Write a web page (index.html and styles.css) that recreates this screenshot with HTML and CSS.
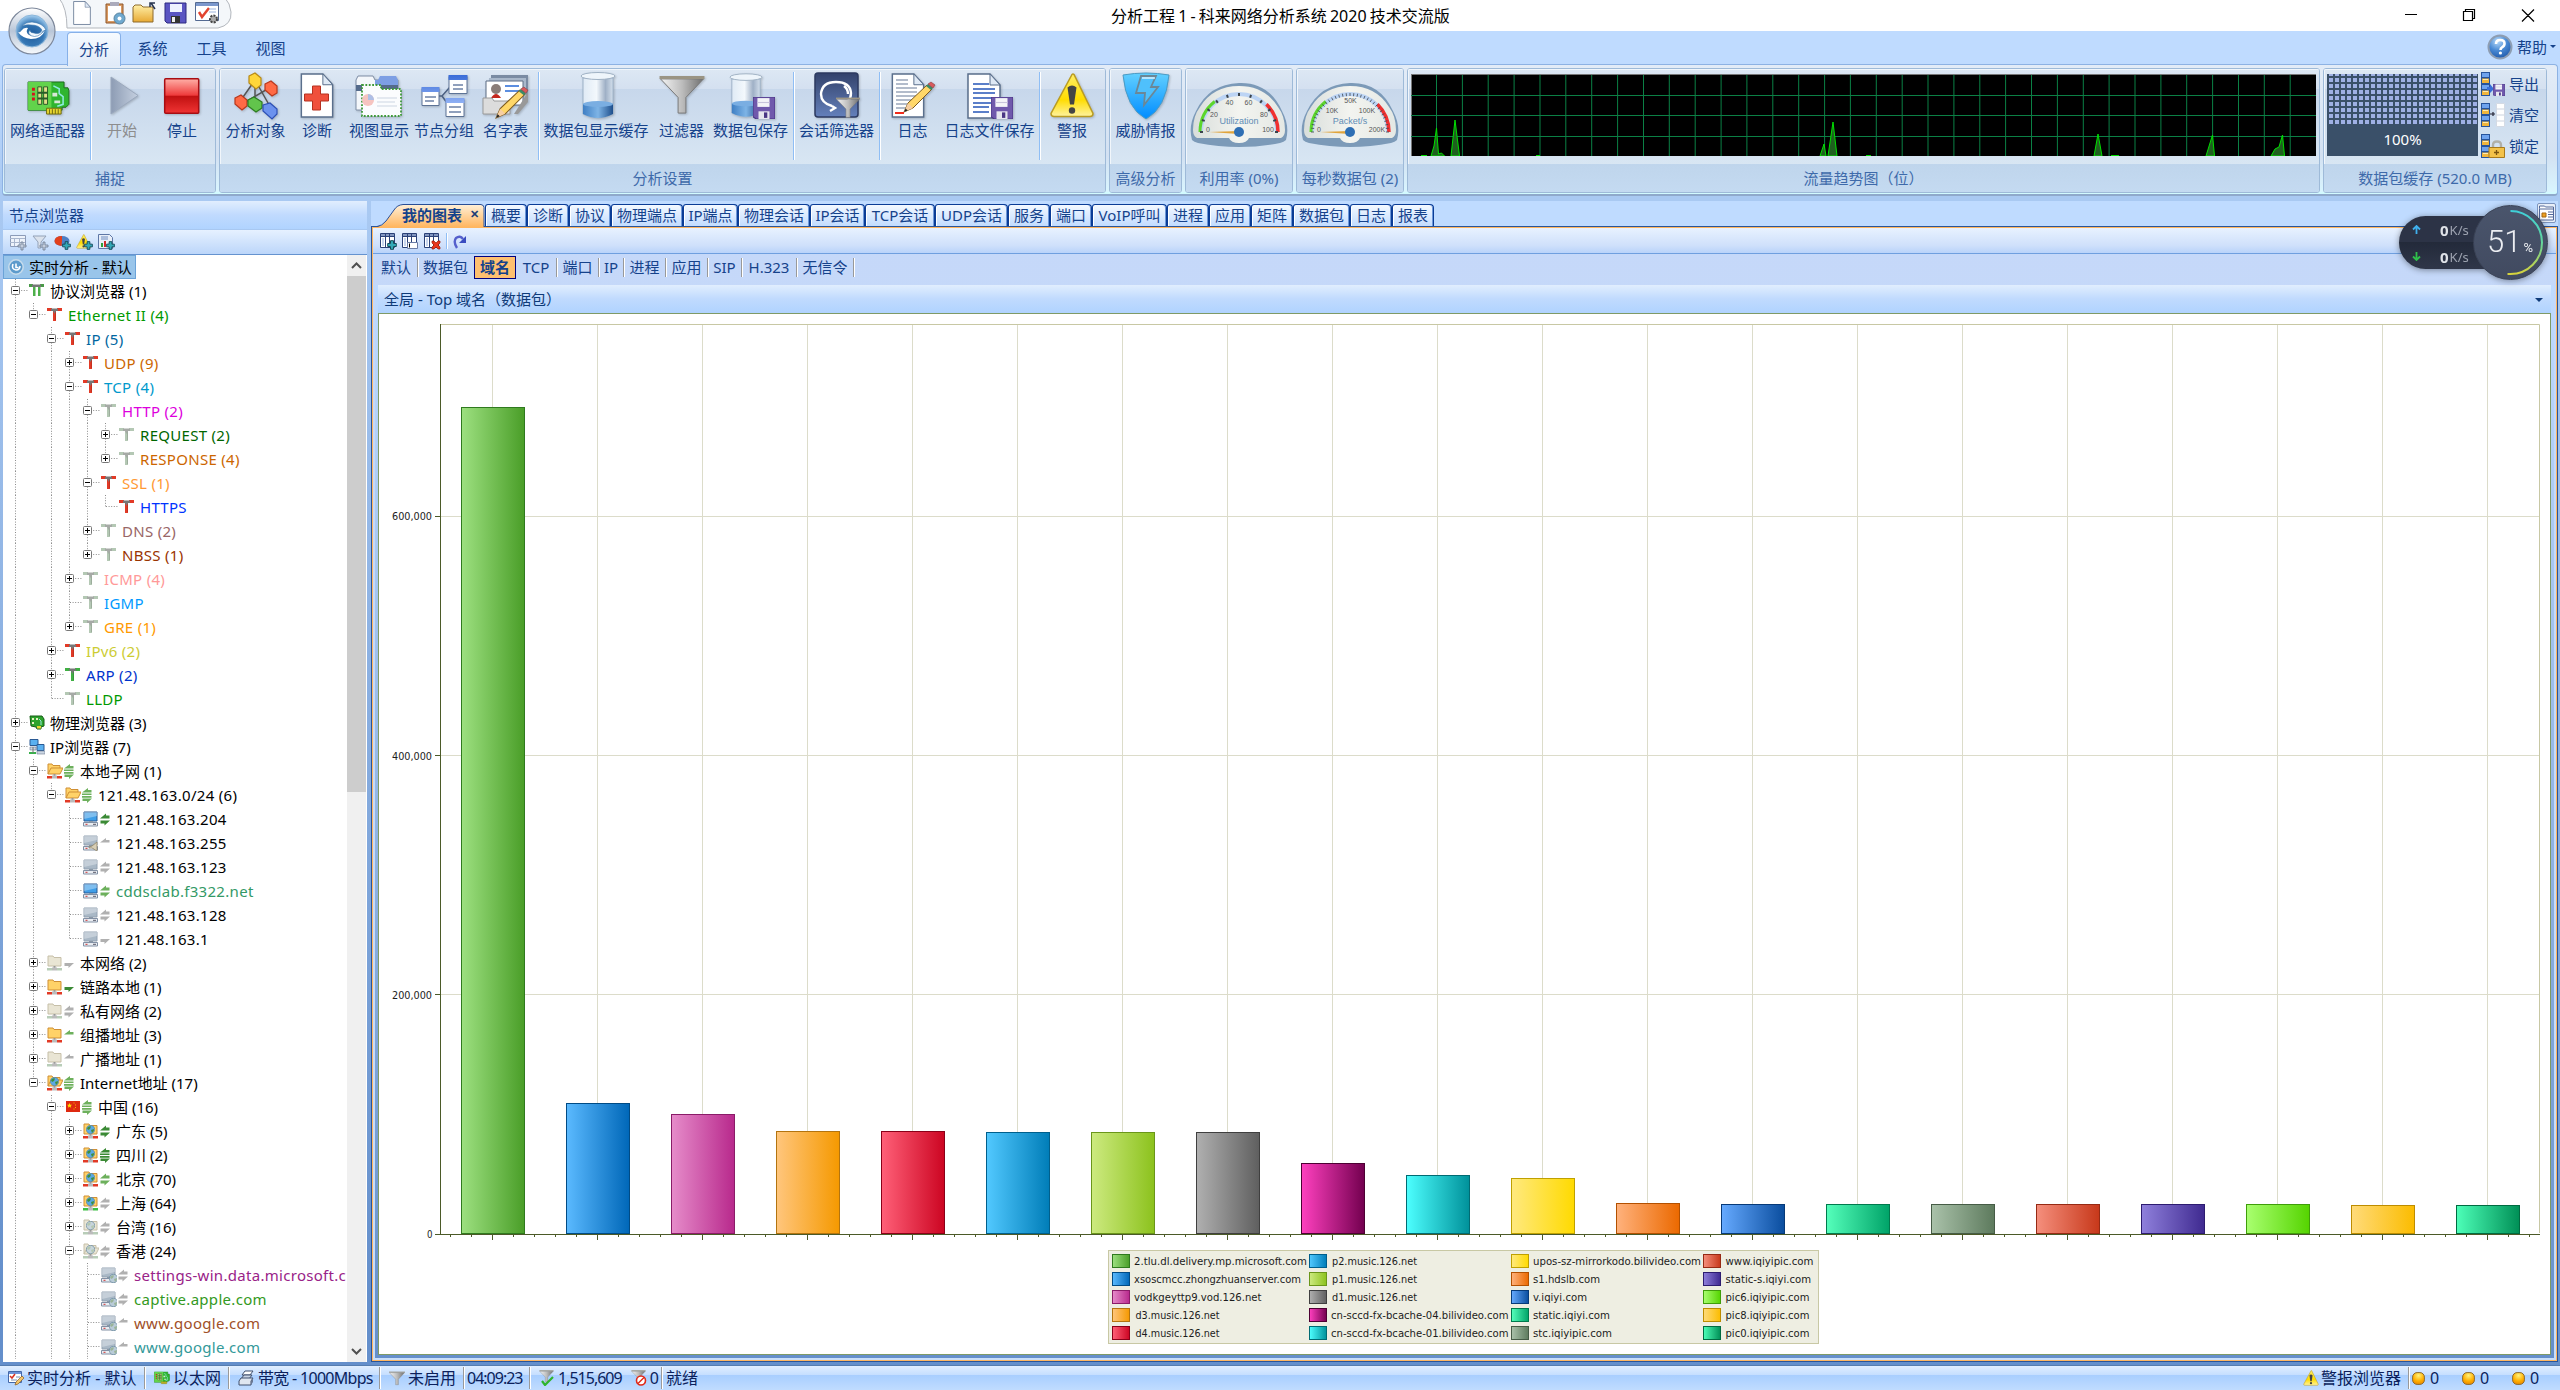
FILE: index.html
```html
<!DOCTYPE html>
<html lang="zh-CN">
<head>
<meta charset="utf-8">
<title>分析工程 1 - 科来网络分析系统 2020 技术交流版</title>
<link rel="stylesheet" href="styles.css">
</head>
<body>
<svg class="defs" width="0" height="0">
  <defs>
    <linearGradient id="gSteel" x1="0" x2="1"><stop offset="0" stop-color="#f4f4f4"/><stop offset=".5" stop-color="#bdbdbd"/><stop offset="1" stop-color="#6f6f6f"/></linearGradient>
    <linearGradient id="gGlass" x1="0" x2="1"><stop offset="0" stop-color="#dfeaf5"/><stop offset=".45" stop-color="#f3f8fc"/><stop offset=".75" stop-color="#9fb0c6"/><stop offset="1" stop-color="#d3dfec"/></linearGradient>
    <linearGradient id="gWater" x1="0" x2="1"><stop offset="0" stop-color="#3f7fc4"/><stop offset=".5" stop-color="#7eb4e6"/><stop offset="1" stop-color="#1f4f8c"/></linearGradient>
    <linearGradient id="gStop" x1="0" x2="0" y1="0" y2="1"><stop offset="0" stop-color="#ffb0a8"/><stop offset=".48" stop-color="#ee3a3a"/><stop offset=".5" stop-color="#c01010"/><stop offset="1" stop-color="#f03434"/></linearGradient>
    <linearGradient id="gWarn" x1="0" x2="0" y1="0" y2="1"><stop offset="0" stop-color="#ffee66"/><stop offset=".6" stop-color="#ffdc00"/><stop offset="1" stop-color="#fff3a0"/></linearGradient>
    <linearGradient id="gShield" x1="0" x2="0" y1="0" y2="1"><stop offset="0" stop-color="#62d0ff"/><stop offset="1" stop-color="#008cff"/></linearGradient>
    <linearGradient id="gNavy" x1="0" x2="0" y1="0" y2="1"><stop offset="0" stop-color="#33426b"/><stop offset="1" stop-color="#6480bb"/></linearGradient>
    <linearGradient id="gFolder" x1="0" x2="0" y1="0" y2="1"><stop offset="0" stop-color="#fff0a8"/><stop offset="1" stop-color="#e8a933"/></linearGradient>
    <linearGradient id="gPlay" x1="0" x2="1"><stop offset="0" stop-color="#8d9cb4"/><stop offset="1" stop-color="#c5d0e0"/></linearGradient>
    <linearGradient id="gWin" x1="0" x2="0" y1="0" y2="1"><stop offset="0" stop-color="#3a6cd8"/><stop offset="1" stop-color="#8fb0f4"/></linearGradient>
    <linearGradient id="gArc" x1="0" x2="0" y1="0" y2="1"><stop offset="0" stop-color="#3fd0d8"/><stop offset=".5" stop-color="#62d59c"/><stop offset="1" stop-color="#d6d23c"/></linearGradient>
    <radialGradient id="gOrb" cx=".5" cy=".6" r=".6"><stop offset="0" stop-color="#1d5b9c"/><stop offset=".6" stop-color="#3577b5"/><stop offset="1" stop-color="#a9d2f2"/></radialGradient>
    <linearGradient id="gRim" x1="0" x2="0" y1="0" y2="1"><stop offset="0" stop-color="#fff"/><stop offset=".5" stop-color="#b9c6d8"/><stop offset="1" stop-color="#f6f9fc"/></linearGradient>
    <radialGradient id="gHelp" cx=".4" cy=".25" r=".8"><stop offset="0" stop-color="#b8dbfa"/><stop offset=".5" stop-color="#4a8ad4"/><stop offset="1" stop-color="#1c56a8"/></radialGradient>
    <linearGradient id="gDial" x1="0" x2="1"><stop offset="0" stop-color="#d9dedb"/><stop offset=".5" stop-color="#f3f4f0"/><stop offset="1" stop-color="#e4e8e4"/></linearGradient>
    <radialGradient id="gBall" cx=".5" cy=".25" r=".8"><stop offset="0" stop-color="#fff27a"/><stop offset=".6" stop-color="#ffae00"/><stop offset="1" stop-color="#e88400"/></radialGradient>

    <symbol id="floppy" viewBox="0 0 20 20"><path d="M0 0h20v20H3l-3-2z" fill="#7059ac"/><path d="M0 0h20v20H3l-3-2z" fill="none" stroke="#4a3684"/><path d="M4 1h11v8H4z" fill="#f4f4f8"/><path d="M4 5h11" stroke="#c8c4dc"/><path d="M5 13h10v7H5z" fill="#e6e6ee"/><path d="M10 14h3v5h-3z" fill="#4a3684"/></symbol>
    <symbol id="plus" viewBox="0 0 10 10"><path d="M3.500 .7h3v2.800h2.800v3H6.500v2.800h-3V6.500H.7v-3h2.800z" fill="#33a9b8" stroke="#124a58"/></symbol>
    <symbol id="pencil" viewBox="0 0 34 34"><path d="M2 32l4-9L25 5l5 4L11 28z" fill="#ffd768" stroke="#7d5a1c"/><path d="M2 32l4-9 5 5z" fill="#f7cfa3"/><path d="M2 32l1.600-3.600 2 2z" fill="#222"/><path d="M24 6l2-2 5 4-2 2z" fill="#3c8a66"/><path d="M26 4l3-2 4 3-2 3z" fill="#d9595c" stroke="#8c3c3c" stroke-width=".6"/></symbol>
    <symbol id="beaker" viewBox="0 0 36 48"><path d="M3 6v36q15 8 30 0V6z" fill="url(#gGlass)" stroke="#9db2c8"/><path d="M3 32v10q15 8 30 0V32q-15-4-30 0z" fill="url(#gWater)"/><ellipse cx="18" cy="32" rx="15" ry="3" fill="#7aaee2"/><ellipse cx="18" cy="4" rx="17" ry="3.500" fill="#eef5fb" stroke="#9fb1c4"/></symbol>
    <symbol id="funnel" viewBox="0 0 46 42"><path d="M1 4L19 23v16h8V23L45 4z" fill="url(#gSteel)" stroke="#777"/><path d="M0 1h46v3H0z" fill="#9a9484"/></symbol>
    <symbol id="sheet" viewBox="0 0 34 46"><path d="M1 1h22l10 11v33H1z" fill="#fff" stroke="#5a6f8c" stroke-width="1.500"/><path d="M23 1v11h10z" fill="#dfe9f5" stroke="#5a6f8c"/></symbol>

    <symbol id="t" viewBox="0 0 15 14"><path d="M6 3h3v11H6z" fill="var(--c)"/><path d="M8 4h1v9H8z" fill="#0002"/><path d="M0 1h5v3H0zM10 1h5v3h-5z" fill="var(--c)"/><path d="M4 1.500h7v2.500H9l-1.500 3L6 4H4z" fill="var(--m)"/></symbol>
    <symbol id="tt" viewBox="0 0 15 14"><path d="M4 3h2.500v10H4zM9 3h2.500v10H9z" fill="#4db04a"/><path d="M0 1h4v3H0zM11 1h4v3h-4z" fill="#4a9a48"/><path d="M3 1.500h9v2.500H3z" fill="#777"/></symbol>
    <symbol id="nic" viewBox="0 0 44 36"><path d="M1 1h37v6h4l1 3v14l-3 3h-4v3H1z" fill="#2fb52f" stroke="#1c6a1c"/><path d="M1 1h24v29H1z" fill="#62d34b"/><path d="M5 7h3v3H5zM5 12h3v3H5zM5 17h3v3H5z" fill="#d4141c"/><path d="M11 6h4v18h-4zM17 6h4v18h-4z" fill="#e3dd8a" stroke="#285c28"/><path d="M11 12h10M11 18h10" stroke="#285c28" stroke-width="2"/><path d="M27 5l6 3v5l4 3v8l-6 2" fill="none" stroke="#8fe9e0" stroke-width="1.600"/><path d="M26 12h5v4h-5zM28 20h6v3h-6z" fill="#d8e8d8"/><path d="M20 28h15v6H20z" fill="#e7d631" stroke="#6f6a10"/><path d="M23 29v5M26 29v5M29 29v5M32 29v5" stroke="#6f6a10"/></symbol>
    <symbol id="folder" viewBox="0 0 16 16"><path d="M1 1h5l1 1.500h7V11H1z" fill="var(--f)" stroke="var(--fb)"/><path d="M6.500 11h2v2h-2z" fill="#999"/><path d="M0 13h5v2.500H0zM10 13h5v2.500h-5z" fill="var(--n)"/><path d="M5 12.500h5v3H5z" fill="#bbb"/></symbol>
    <symbol id="folderOpen" viewBox="0 0 16 16"><path d="M1 11V1h4l1 1.500h7V5" fill="var(--f)" stroke="var(--fb)"/><path d="M1 11l3-6h12l-3 6z" fill="var(--f)" stroke="var(--fb)"/><path d="M6.500 11h2v2h-2z" fill="#999"/><path d="M0 13h5v2.500H0zM10 13h5v2.500h-5z" fill="var(--n)"/><path d="M5 12.500h5v3H5z" fill="#bbb"/></symbol>
    <symbol id="globe" viewBox="0 0 9 9"><circle cx="4.500" cy="4.500" r="4.200" fill="var(--g1)" stroke="#5b7f96" stroke-width=".6"/><path d="M1 3q2-2.500 4-1.500L4 4 2 5zM5 5l3-1q.5 2-2 4z" fill="var(--g2)"/></symbol>
    <symbol id="pc" viewBox="0 0 16 16"><path d="M1 1h13v9H1z" fill="var(--s)" stroke="var(--sb)"/><path d="M1 1h13v4L1 8z" fill="#fff5"/><path d="M6 10h4v1.500H6z" fill="#8a98a6"/><path d="M.5 11.500h14v3.500H.5z" fill="#e9edf2" stroke="#8290a4"/><path d="M2.500 13.300h2" stroke="#c33"/><path d="M10 13.300h3" stroke="#556"/></symbol>
    <symbol id="arr4" viewBox="0 0 11 15"><path d="M0 4.500l6-4.500v2h3.500v2.500zM0 5.400h9.500v1.700H0zM0 8h9.500v1.700H0zM10 10.500L5 15v-2H.5v-2.500z" fill="var(--a)"/></symbol>
    <symbol id="arr2" viewBox="0 0 11 15"><path d="M0 6.500l6-5v2h3.500v3zM10 8.500l-5.500 5v-2H.5v-3z" fill="var(--a)"/></symbol>
    <symbol id="arrU" viewBox="0 0 11 15"><path d="M0 6.500l6-4.500v2h3.500v2.500z" fill="var(--a)"/></symbol>
    <symbol id="arrD" viewBox="0 0 11 15"><path d="M10 7l-5.500 5v-2H.5V7z" fill="var(--a)"/></symbol>
    <symbol id="warn" viewBox="0 0 46 46"><path d="M23 2L2 41q0 3 3 3h36q3 0 3-3L25 2q-1-1-2 0z" fill="url(#gWarn)" stroke="#b99b22" stroke-width="1.500"/><path d="M18.500 15q4.500-4 9 0l-2.500 17h-4z" fill="#444"/><circle cx="23" cy="38" r="3.200" fill="#444"/></symbol>
    <symbol id="stack" viewBox="0 0 9 24"><path d="M0 0h9v24H0z" fill="#27549c"/><path d="M1 1h7v4H1zM1 13h7v4H1z" fill="#6fa3ee"/><path d="M1 6.500h7v4.500H1zM1 18.500h7v4.500H1z" fill="#f0b53c"/><path d="M2 7.500h5M2 19.500h5" stroke="#fdeab2"/></symbol>
    <symbol id="table" viewBox="0 0 16 16"><path d="M.5 .5h14v14H.5z" fill="#fff" stroke="#2a4178"/><path d="M1 1h13v2.500H1z" fill="#8296c0"/><path d="M5.500 1v13M9.500 1v13M1 3.500h13" stroke="#2a4178"/><path d="M2 5h2v8H2z" fill="#c8d6ee"/></symbol>
  </defs>
</svg>

<header class="titlebar">
  <div class="qat">
    <svg width="171" height="29" viewBox="61 0 171 29">
      <path d="M59-2q8 10 8 30h151q14-3 13-16-1-9-6-14" fill="#f4f7fa" stroke="#b3b7bd"/>
      <use href="#sheet" x="73" y="1" width="18" height="24"/>
      <path d="M106 4h17v19h-17z" fill="#d99a62" stroke="#8e562a"/><path d="M108 6h13v15h-13z" fill="#fff"/><path d="M110 2h9v4h-9z" fill="#aab"/><circle cx="119.500" cy="18.500" r="5.500" fill="#6fa9cf" stroke="#58839f"/><circle cx="119.500" cy="18.500" r="2" fill="#fff"/>
      <path d="M133 22V7l2-2h6l2 2h10v15z" fill="url(#gFolder)" stroke="#8d6b2c"/><path d="M155 9l-4-6M150 7V3h5" fill="none" stroke="#26344f" stroke-width="1.500"/>
      <path d="M165 3h21v20h-19l-2-2z" fill="#5a55c2" stroke="#2d2a80"/><path d="M170 4h12v8h-12z" fill="#eef2ff"/><path d="M171 16h9v7h-9z" fill="#333"/><path d="M172 17h3v5h-3z" fill="#eee"/>
      <path d="M195.500 2.500h23v18h-23z" fill="#fff" stroke="#546a92"/><path d="M196 3h22v3h-22z" fill="#7a97cc"/><path d="M199 12l3 5 7-9" fill="none" stroke="#e2442f" stroke-width="2.500"/><path d="M209 9h7M209 12h7" stroke="#9db4dd"/><circle cx="213.500" cy="19" r="3.500" fill="#aaa" stroke="#444" stroke-dasharray="2 1.200" stroke-width="2"/>
    </svg>
  </div>
  <h1 class="title">分析工程 1 - 科来网络分析系统 2020 技术交流版</h1>
  <svg class="winbtns" width="160" height="31" viewBox="2400 0 160 31"><g fill="none" stroke="#000" stroke-width="1.200"><path d="M2405 14.500h12M2463.500 11.500h9v9h-9zM2465.500 11v-1.500h9v9h-1.500M2522 9.500l12 12M2534 9.500l-12 12"/></g></svg>
</header>

<nav class="menubar">
  <div class="mtab on">分析</div><div class="mtab">系统</div><div class="mtab">工具</div><div class="mtab">视图</div>
  <div class="help">
    <svg width="26" height="26" viewBox="0 0 26 26"><circle cx="13" cy="13" r="11.500" fill="url(#gHelp)" stroke="#8d9db2" stroke-width="2"/><path d="M9 10q0-4 4.200-4 4.300 0 4.300 3.500 0 2.500-2.500 3.800-1.500.8-1.500 2.700" fill="none" stroke="#fff" stroke-width="2.600"/><circle cx="13.400" cy="19" r="1.600" fill="#fff"/></svg>
    <span>帮助</span><i class="caret"></i>
  </div>
</nav>

<svg class="orb" width="50" height="50" viewBox="0 0 50 50"><circle cx="25" cy="25" r="23" fill="url(#gRim)" stroke="#7d889b" stroke-width="1.200"/><circle cx="25" cy="25" r="16" fill="url(#gOrb)" stroke="#8bb6da"/><path d="M11 26q4 6 13 7 11 0 14-9-2 3-6 4-6 3-10 1-4-3-1-7-4-1-7 3-1 2-3 1z" fill="#fff"/><path d="M39 24q-3-7-14-8-6 0-10 4 6-2 9-1 8 0 11 5-2 5-8 3-4 0-4-3-2 2-1 4 5 5 12 0 2-4 5-4z" fill="#f2f8fd" stroke="#3c76ab" stroke-width=".6"/></svg>

<section class="ribbon">
  <div class="group" style="width:212px">
    <div class="gbody">
      <div class="btn" style="width:85px"><svg viewBox="0 0 48 48"><use href="#nic" x="3" y="9" width="43" height="35"/></svg><span>网络适配器</span></div>
      <i class="vsep"></i>
      <div class="btn dim" style="width:60px"><svg viewBox="0 0 48 48"><path d="M13 5v37L40 23.500z" fill="url(#gPlay)" stroke="#9aa8bd"/></svg><span>开始</span></div>
      <div class="btn" style="width:60px"><svg viewBox="0 0 48 48"><rect x="6.700" y="6.700" width="34" height="34.600" rx="1" fill="url(#gStop)" stroke="#a80d12" stroke-width="1.500"/></svg><span>停止</span></div>
    </div>
    <div class="glabel">捕捉</div>
  </div>
  <div class="group" style="width:887px">
    <div class="gbody">
      <div class="btn" style="width:71px"><svg viewBox="0 0 48 48"><path d="M23 8L9 28M23 8L40 38M39 15L10 32M23 8v24" stroke="#555" stroke-width="1.500"/><g stroke-width="1.200"><path d="M17 4l6-3 6 5v7l-5 4-7-6z" fill="#ffd63a" stroke="#b98a14"/><path d="M33 12l6-3 6 5v7l-5 3-7-6z" fill="#ff6a45" stroke="#b8371c"/><path d="M3 26l6-3 6 5v6l-5 4-7-6z" fill="#ff6a45" stroke="#b8371c"/><path d="M16 28l6-3 8 5v6l-6 4-8-6z" fill="#62c44c" stroke="#2d7d21"/><path d="M31 33l7-2 7 6v5l-5 5-9-8z" fill="#6c92ee" stroke="#2c4fb4"/></g></svg><span>分析对象</span></div>
      <div class="btn" style="width:52px"><svg viewBox="0 0 48 48"><use href="#sheet" x="7" y="1" width="34" height="45"/><path d="M19.500 14h8v8h8v7h-8v9h-8v-9h-8v-7h8z" fill="#f0503c" stroke="#b5301f"/></svg><span>诊断</span></div>
      <div class="btn" style="width:72px"><svg viewBox="0 0 48 48"><path d="M1 8l2-4h15l2 4h23v30H1z" fill="#f4f7fb" stroke="#7f8ea6"/><path d="M23 8l2-4h16l2 4v10H20V8z" fill="#7d9fe4"/><path d="M1 13h42v6H1z" fill="#556b8c"/><path d="M7 13h19v4h20v27H7z" fill="#fbfcfe" stroke="#3f9a3a" stroke-width="1.800" stroke-dasharray="1.800 1.600"/><circle cx="13" cy="28" r="6" fill="#f6c4c0"/><path d="M13 22a6 6 0 0 1 6 6h-6z" fill="#aebfe6"/><path d="M22 26h20M22 30h18M22 34h20" stroke="#ccd5e2"/></svg><span>视图显示</span></div>
      <div class="btn" style="width:58px"><svg viewBox="0 0 48 48"><path d="M19 24h3l8-9M22 24l8 11" fill="none" stroke="#4b5f80" stroke-width="1.500"/><g fill="#fff" stroke="#5d7396"><path d="M2 16.500h17v17H2zM29 4.500h18v17H29zM26 27.500h18v17H26z"/></g><path d="M1.500 15h18v5h-18zM28.500 3h19v5h-19zM25.500 26h19v5h-19z" fill="url(#gWin)"/><path d="M5 25h11M5 29h9M33 13h10M33 17h10M29 35h12M29 40h12" stroke="#6c81a6" stroke-width="1.500"/></svg><span>节点分组</span></div>
      <div class="btn" style="width:65px"><svg viewBox="0 0 48 48"><path d="M9 3h37v26H9z" fill="#7a8ba3"/><path d="M7 6h37v24H7z" fill="#a9b8cb"/><path d="M4 9h37v24H4z" fill="#fff" stroke="#5c6c84"/><circle cx="14" cy="17" r="5" fill="#8a7d78"/><path d="M9 26q5-8 10 0z" fill="#c4281e"/><path d="M23 14h14M23 19h14" stroke="#5c8ee0" stroke-width="2"/><path d="M1 26h9l2 3h16v13H1z" fill="#dcdcdc" stroke="#9a9a9a"/><path d="M32 42l14-22v10L36 42z" fill="#999"/><use href="#pencil" x="12" y="13" width="35" height="35"/></svg><span>名字表</span></div>
      <i class="vsep"></i>
      <div class="btn" style="width:112px"><svg viewBox="0 0 48 48"><use href="#beaker" x="8" y="0" width="36" height="48"/></svg><span>数据包显示缓存</span></div>
      <div class="btn" style="width:59px"><svg viewBox="0 0 48 48"><use href="#funnel" x="1" y="3" width="46" height="41"/></svg><span>过滤器</span></div>
      <div class="btn" style="width:79px"><svg viewBox="0 0 48 48"><use href="#beaker" x="2" y="0" width="34" height="48"/><use href="#floppy" x="26" y="25" width="22" height="22"/></svg><span>数据包保存</span></div>
      <i class="vsep m4"></i>
      <div class="btn" style="width:81px"><svg viewBox="0 0 48 48"><rect x="2" y="1" width="43" height="44" rx="3" fill="url(#gNavy)" stroke="#2c3a60" stroke-width="1.500"/><path d="M19 34q-11-3-11-12 1-12 15-12t15 11q0 5-3 8M19 34l3 2-5 3M31 14q4 3 4 8" fill="none" stroke="#fff" stroke-width="2.400"/><use href="#funnel" x="23" y="25" width="24" height="22"/></svg><span>会话筛选器</span></div>
      <i class="vsep m3"></i>
      <div class="btn" style="width:61px"><svg viewBox="0 0 48 48"><use href="#sheet" x="2" y="1" width="34" height="45"/><path d="M7 8h12M7 12h12M7 16h21M7 20h21M7 24h20M7 28h16M7 32h14M7 36h12" stroke="#9aa7bb" stroke-width="1.600"/><path d="M6 41h9" stroke="#f02c1c" stroke-width="2"/><use href="#pencil" x="13" y="8" width="34" height="34"/></svg><span>日志</span></div>
      <div class="btn" style="width:93px"><svg viewBox="0 0 48 48"><use href="#sheet" x="1" y="1" width="34" height="46"/><path d="M7 12h16M7 17h22M7 21h22M7 26h22M7 31h18M7 35h16M7 40h16" stroke="#2656b8" stroke-width="1.700"/><use href="#floppy" x="25" y="25" width="22" height="22"/></svg><span>日志文件保存</span></div>
      <i class="vsep m4"></i>
      <div class="btn" style="width:60px"><svg viewBox="0 0 48 48"><use href="#warn" x="1" y="0" width="46" height="47"/></svg><span>警报</span></div>
    </div>
    <div class="glabel">分析设置</div>
  </div>
  <div class="group" style="width:73px">
    <div class="gbody"><div class="btn" style="width:71px"><svg viewBox="0 0 48 48"><path d="M24 47Q4 36 1 3q23-4 46 0-3 33-23 44z" fill="url(#gShield)" stroke="#4a9ac4"/><path d="M19 4h15l-5 11h7L22 33l1-12h-9z" fill="#4fc0fc" stroke="#6c8796" stroke-width="1.800"/><path d="M20 6h13" stroke="#fff" stroke-width="1.200"/></svg><span>威胁情报</span></div></div>
    <div class="glabel">高级分析</div>
  </div>
  <div class="group" style="width:108px">
    <div class="gbody mid" id="gauge1"></div>
    <div class="glabel">利用率 (0%)</div>
  </div>
  <div class="group" style="width:108px">
    <div class="gbody mid" id="gauge2"></div>
    <div class="glabel">每秒数据包 (2)</div>
  </div>
  <div class="group" style="width:913px">
    <div class="gbody trend"><svg id="trend" width="905" height="82" viewBox="0 0 905 82"></svg></div>
    <div class="glabel">流量趋势图（位）</div>
  </div>
  <div class="group" style="width:224px">
    <div class="gbody cache">
      <div class="cachebox"><div class="dots"></div><span>100%</span></div>
      <div class="cbtns">
        <div class="cbtn"><svg viewBox="0 0 24 24"><use href="#stack" width="9" height="24"/><path d="M6 15h3v-3l4 5-4 4v-3H6z" fill="#3a6fd8"/><use href="#floppy" x="12" y="12" width="12" height="12"/></svg>导出</div>
        <div class="cbtn"><svg viewBox="0 0 24 24"><use href="#stack" width="9" height="24"/><path d="M9 11h5M12 9v4" stroke="#223" stroke-width="1.200"/><path d="M15.500 .5h8v23h-8z" fill="#fff" stroke="#d4dae4"/><path d="M16 6h7M16 12h7M16 18h7" stroke="#ccd3df"/></svg>清空</div>
        <div class="cbtn"><svg viewBox="0 0 24 24"><use href="#stack" width="9" height="24"/><path d="M12 14v-3q0-3.500 4-3.500t4 3.500v3" fill="none" stroke="#b0b0a8" stroke-width="2.400"/><path d="M8 13.500h15.500v10H8z" fill="#f3c24a" stroke="#a87a1c"/><path d="M13 18.500h5M15.500 16v5" stroke="#7a5410" stroke-width="1.300"/></svg>锁定</div>
      </div>
    </div>
    <div class="glabel">数据包缓存 (520.0 MB)</div>
  </div>
</section>

<main class="work">
  <aside class="side">
    <div class="sidehead">节点浏览器</div>
    <div class="sidetools">
      <svg width="17" height="17" viewBox="0 0 17 17"><path d="M.5 1.500h15v11H.5z" fill="#eef3fb" stroke="#8c9bb8"/><path d="M0 4.500h15M0 8.500h15M4.500 4v8M9.500 4v8" stroke="#a9b6cd"/><path d="M11 8h2v3h3v2h-3v3h-2v-3H8v-2h3z" fill="#c3cddd" stroke="#6d7c93" stroke-width=".8"/></svg>
      <svg width="17" height="17" viewBox="0 0 17 17"><path d="M1 2h13L9 8v6H6V8z" fill="#dbe2ec" stroke="#94a2b8"/><path d="M11 8h2v3h3v2h-3v3h-2v-3H8v-2h3z" fill="#c3cddd" stroke="#6d7c93" stroke-width=".8"/></svg>
      <svg width="17" height="17" viewBox="0 0 17 17"><ellipse cx="8" cy="7" rx="7.500" ry="5" fill="#4d7fc4"/><path d="M8 7V2Q1 2 .5 7q0 4 7 5z" fill="#e2401c"/><use href="#plus" x="8" y="7" width="9" height="9"/></svg>
      <svg width="17" height="17" viewBox="0 0 17 17"><use href="#warn" width="15" height="15"/><use href="#plus" x="8" y="7" width="9" height="9"/></svg>
      <svg width="17" height="17" viewBox="0 0 17 17"><path d="M.5 .5h11l3 3v11H.5z" fill="#e8eef8" stroke="#5e77a6"/><path d="M3 3h7M3 5h7" stroke="#6f8cc0"/><path d="M3 9h2v4H3z" fill="#2fa03c"/><path d="M6 7h2v6H6z" fill="#d02c2c"/><use href="#plus" x="8" y="7" width="9" height="9"/></svg>
    </div>
    <div class="treebox">
      <div class="tree" id="tree"></div>
      <div class="scroll"><svg width="19" height="21" viewBox="0 0 19 21"><path d="M5 13l4.500-4.500L14 13" fill="none" stroke="#505050" stroke-width="2"/></svg><div class="thumb"></div><svg width="19" height="21" viewBox="0 0 19 21"><path d="M5 8l4.500 4.500L14 8" fill="none" stroke="#505050" stroke-width="2"/></svg></div>
    </div>
  </aside>

  <section class="main">
    <div class="tabs">
      <div class="tab active"><svg width="108" height="23" viewBox="0 0 108 23"><defs><linearGradient id="gTab" x1="0" x2="0" y1="0" y2="1"><stop offset="0" stop-color="#fff0d8"/><stop offset="1" stop-color="#ffb660"/></linearGradient></defs><path d="M0 23Q5 22 9 17L17 6Q20 1 26 .5h78q3 .5 3 3V23z" fill="url(#gTab)"/><path d="M0 22.500Q5 22 9 17L17 6Q20 1 26 .5h78q3 .5 3 3V23" fill="none" stroke="#2a4f96"/></svg><b>我的图表</b><em>✕</em></div>
      <div class="tab" style="width:42px">概要</div><div class="tab" style="width:42px">诊断</div><div class="tab" style="width:42px">协议</div><div class="tab" style="width:72px">物理端点</div><div class="tab" style="width:55px">IP端点</div><div class="tab" style="width:72px">物理会话</div><div class="tab" style="width:55px">IP会话</div><div class="tab" style="width:70px">TCP会话</div><div class="tab" style="width:73px">UDP会话</div><div class="tab" style="width:42px">服务</div><div class="tab" style="width:42px">端口</div><div class="tab" style="width:75px">VoIP呼叫</div><div class="tab" style="width:42px">进程</div><div class="tab" style="width:42px">应用</div><div class="tab" style="width:42px">矩阵</div><div class="tab" style="width:57px">数据包</div><div class="tab" style="width:42px">日志</div><div class="tab" style="width:42px">报表</div>
      <div class="cornerbtn"><svg width="16" height="16" viewBox="0 0 16 16"><path d="M.5 3.500V1h5l1 1h8v13H.5z" fill="#fff" stroke="#52689a"/><path d="M1 4h14" stroke="#52689a"/><path d="M3 8h4v4H3z" fill="#f0a020" stroke="#a86a10"/><path d="M9 7h5M9 9.500h5M9 12h5" stroke="#52689a"/></svg></div>
    </div>
    <div class="frame"><div class="inner">
      <div class="ctools">
        <svg width="17" height="17" viewBox="0 0 17 17"><use href="#table" width="16" height="16"/><use href="#plus" x="7" y="7" width="10" height="10"/></svg>
        <svg width="17" height="17" viewBox="0 0 17 17"><use href="#table" width="16" height="16"/><path d="M5.500 9.500h10v6h-10z" fill="#fff" stroke="#6a7ca6"/><path d="M7.500 10.500v4" stroke="#000"/></svg>
        <svg width="17" height="17" viewBox="0 0 17 17"><use href="#table" width="16" height="16"/><path d="M8 8h2l2 2 2-2h2v2l-2 2 2 2v2h-2l-2-2-2 2H8v-2l2-2-2-2z" fill="#e8391e" stroke="#9c1c0c" stroke-width=".7"/></svg>
        <i class="tsep"></i>
        <svg width="17" height="17" viewBox="0 0 17 17"><path d="M4 15Q0 9 3 5q4-3 7 1" fill="none" stroke="#5560cc" stroke-width="2.400"/><path d="M13 3v7H6z" fill="#3a4cc0"/></svg>
      </div>
      <div class="subs">
        <span style="width:43px">默认</span><span class="nb" style="width:56px">数据包</span><span class="on">域名</span><span style="width:41px">TCP</span><span style="width:42px">端口</span><span style="width:25px">IP</span><span style="width:42px">进程</span><span style="width:42px">应用</span><span style="width:34px">SIP</span><span style="width:55px">H.323</span><span style="width:57px">无信令</span>
      </div>
      <div class="chartwrap">
        <div class="chead"><span>全局 - Top 域名（数据包）</span><i></i></div>
        <div class="chartbox"><svg id="chart" width="2170" height="1040" viewBox="379 314 2170 1040"></svg></div>
      </div>
    </div></div>
  </section>
</main>

<footer class="status">
  <div class="st" style="width:145px"><svg width="16" height="16" viewBox="0 0 16 16"><path d="M.5 1.500h13v11H.5z" fill="#fff" stroke="#4468a8"/><path d="M1 2h12v2H1z" fill="#6c93d8"/><path d="M2 6l2 2 3-4" fill="none" stroke="#d83020" stroke-width="1.500"/><path d="M3 10h6M8 7h4" stroke="#7890b8"/><path d="M7 15l1-3 6-6 2 2-6 6z" fill="#f3c66a" stroke="#8a5a20" stroke-width=".7"/></svg>实时分析 - 默认</div>
  <div class="st" style="width:84px"><svg width="16" height="14" viewBox="0 0 44 36"><use href="#nic" width="44" height="36"/></svg>以太网</div>
  <div class="st band" style="width:151px"><svg width="17" height="16" viewBox="0 0 17 16"><path d="M4 5l3-4h8l-3 4z" fill="#fff" stroke="#40506e"/><path d="M3 9l3-4h8l-3 4z" fill="#c9d4e4" stroke="#40506e"/><path d="M1 11l2-3h12l-2 3v4H1z" fill="#dfe6f0" stroke="#40506e"/><path d="M13 11l2-3v4l-2 3z" fill="#6a7894"/></svg>带宽 - 1000Mbps</div>
  <div class="st" style="width:84px"><svg width="16" height="15" viewBox="0 0 46 42"><use href="#funnel" width="46" height="42"/></svg>未启用</div>
  <div class="st tight nopad" style="width:66px">04:09:23</div>
  <div class="st tight" style="width:132px"><svg width="16" height="16" viewBox="0 0 16 16"><use href="#funnel" width="15" height="13"/><path d="M3 11l3 4 8-8" fill="none" stroke="#2fb52c" stroke-width="2.200"/></svg>1,515,609<svg class="s2" width="16" height="16" viewBox="0 0 16 16"><use href="#funnel" width="15" height="13"/><circle cx="10" cy="10.500" r="4.500" fill="#fff" stroke="#e02818" stroke-width="1.600"/><path d="M7 13.500l6-6" stroke="#e02818" stroke-width="1.500"/></svg>0</div>
  <div class="ready">就绪</div>
  <div class="alarm"><svg width="16" height="16" viewBox="0 0 46 46"><use href="#warn" width="46" height="46"/></svg>警报浏览器</div>
  <div class="cnt"><svg width="13" height="13" viewBox="0 0 13 13"><rect x=".6" y=".6" width="11.800" height="11.800" rx="4.500" fill="url(#gBall)" stroke="#8a6a30"/></svg>0</div>
  <div class="cnt"><svg width="13" height="13" viewBox="0 0 13 13"><rect x=".6" y=".6" width="11.800" height="11.800" rx="4.500" fill="url(#gBall)" stroke="#8a6a30"/></svg>0</div>
  <div class="cnt"><svg width="13" height="13" viewBox="0 0 13 13"><rect x=".6" y=".6" width="11.800" height="11.800" rx="4.500" fill="url(#gBall)" stroke="#8a6a30"/></svg>0</div>
</footer>

<div class="meter">
  <div class="pill"><div><svg width="9" height="9" viewBox="0 0 9 9"><path d="M4.500 9V2M1 4.500l3.500-3.500L8 4.500" fill="none" stroke="#3fb0ee" stroke-width="1.800"/></svg><b>0</b>K/s</div><div><svg width="9" height="9" viewBox="0 0 9 9"><path d="M4.500 0v7M1 4.500L4.500 8 8 4.500" fill="none" stroke="#2fc04a" stroke-width="1.800"/></svg><b>0</b>K/s</div></div>
  <div class="disc"><svg width="75" height="75" viewBox="0 0 75 75"><path d="M37.500 6a31.500 31.500 0 0 1 0 63h-3" fill="none" stroke="url(#gArc)" stroke-width="2"/></svg><span>51<small>%</small></span></div>
</div>
<script src="app.js"></script>
</body>
</html>
```
FILE: styles.css
```css
* { box-sizing: border-box; }
html { height: 1390px; overflow: hidden; }
body { margin: 0; width: 2560px; height: 1390px; overflow: hidden; display: flex; flex-direction: column; position: relative;
  font: 15px/20px "Noto Sans", "Noto Sans CJK SC", sans-serif; color: #15428b; font-variant-ligatures: none;
  background: linear-gradient(#bfdbff 0, #bfdbff 64px, #a9c9f2 196px, #a9c9f2 210px, #648fcb 1300px); white-space: nowrap; }
.defs { position: absolute; }
i, em { font-style: normal; }
svg { display: block; flex: none; }

.titlebar { height: 31px; background: #fff; display: flex; align-items: flex-start; flex: none; position: relative; }
.qat { width: 171px; margin-left: 61px; }
.qat svg { overflow: visible; }
.title { margin: 5px auto 0 879px; font-size: 16px; line-height: 22px; font-weight: 400; color: #000; word-spacing: -1px; }
.menubar { height: 33px; background: #bfdbff; display: flex; flex: none; padding-left: 64px; }
.mtab { width: 59px; height: 33px; line-height: 35px; text-align: center; }
.mtab.on { border: 1px solid #86b0e8; border-bottom: 0; border-radius: 4px 4px 0 0; background: linear-gradient(#f6faff, #dfeaf8); margin: 1px 1px -1px 3px; width: 54px; height: 34px; line-height: 33px; z-index: 2; }
.mtab.on + .mtab { margin-left: 1px; }
.help { margin-left: auto; display: flex; align-items: center; padding: 0 4px 2px 0; }
.help svg { margin: 0 4px 0 0; }
.caret { border: 3px solid transparent; border-top-color: #15428b; margin: 2px 0 0 3px; }
.orb { position: absolute; left: 7px; top: 6px; z-index: 3; }

.ribbon { height: 132px; margin: 0 2px 5px; padding: 3px 0 0 2px; border: 1px solid #8db2e3; border-bottom: 2px solid #8fa9cb; border-radius: 4px; flex: none; display: flex; gap: 3px; background: linear-gradient(#e3ecf7, #d3e1f2 70%, #d9f6ff); box-shadow: inset 0 -2px #d2faff; }
.ribbon .group:first-child { margin-left: -1px; }
.group { height: 125px; border: 1px solid #9ebad8; border-radius: 3px; display: flex; flex-direction: column; box-shadow: inset 1px 1px #f1f6fb; overflow: hidden; }
.gbody { height: 95px; display: flex; background: linear-gradient(#dde8f4, #d4e0f0 20px, #c7d7eb 20px, #d8e6f3); padding-top: 3px; box-shadow: inset 1px 1px #f1f6fb; }
.glabel { flex: 1; text-align: center; background: linear-gradient(#bfd5ec, #c4daf1); color: #3e6aaa; line-height: 28px; }
.btn { display: flex; flex-direction: column; align-items: center; flex: none; }
.btn > svg { width: 48px; height: 48px; filter: drop-shadow(1px 1px 1px #0003); }
.btn span { line-height: 20px; }
.btn.dim { color: #8d8d8d; }
.vsep { width: 2px; height: 88px; flex: none; background: linear-gradient(90deg, #8fbef5 50%, #fff 50%); }
.vsep.m3 { margin: 0 1px 0 2px; }
.vsep.m4 { margin: 0 1px 0 3px; }
.gbody.mid { padding-top: 13px; justify-content: center; }
.dial-num { font: 7px "Liberation Sans", sans-serif; fill: #555; text-anchor: middle; }
.dial-name { font: 9px "Liberation Sans", sans-serif; fill: #5f8cb5; text-anchor: middle; }
.gbody.trend { padding: 5px 0 0 3px; }
.gbody.cache { padding: 3px 0 0 3px; gap: 3px; }
.cachebox { width: 151px; height: 82px; margin-top: 2px; background: #3a5069; color: #fff; text-align: center; }
.dots { height: 50px; margin-left: 2px; background: linear-gradient(90deg, #0000 4px, #3a5069 4px) 0 0/6px 6px, linear-gradient(#3a5069 2px, #9fb0e4 2px) 0 2px/6px 6px; }
.cachebox span { display: block; line-height: 31px; }
.cbtns { display: flex; flex-direction: column; gap: 7px; }
.cbtn { display: flex; align-items: center; gap: 4px; height: 24px; }
.cbtn svg { width: 24px; height: 24px; }

.work { height: 1161px; display: flex; flex: none; padding: 0 2px 0 3px; }
.side { width: 364px; margin-right: 4px; display: flex; flex-direction: column; }
.sidehead { height: 28px; padding-left: 6px; line-height: 29px; background: linear-gradient(#e1eefe, #c0dafe 50%, #b0d3ff); margin-bottom: 1px; }
.sidetools { height: 25px; background: linear-gradient(#e6f1ff, #bcd6fa); border-bottom: 1px solid #6593cf; display: flex; gap: 5px; padding: 4px 0 0 7px; }
.treebox { flex: 1; display: flex; background: #fff; overflow: hidden; }
.tree { flex: 1; overflow: hidden; color: #000; height: 1107px; }
.scroll { width: 20px; background: #f0f0f0; display: flex; flex-direction: column; border-right: 1px solid #fff; }
.thumb { height: 516px; background: #cdcdcd; margin-bottom: auto; }
.row { height: 24px; display: flex; align-items: center; }
.row > * { flex: none; }
.row.root { width: 133px; background: #99c5ea; border: 1px solid #6ba3d8; gap: 5px; padding-left: 4px; margin-bottom: 0; }
.row svg.lines { width: 18px; height: 24px; }
.row .ic { width: 16px; height: 16px; margin-right: 1px; }
.row .ar { width: 11px; height: 15px; margin-right: 5px; }
.row .txt { margin-left: 4px; line-height: 22px; margin-bottom: 1px; }
.row .ar + .txt { margin-left: 0; }
.row .lat { letter-spacing: .3px; }

.main { flex: 1; display: flex; flex-direction: column; min-width: 0; background: #bfdbff; }
.tabs { height: 25px; display: flex; padding: 3px 0 0 6px; background: #bfdbff; }
.tab { height: 22px; border: 1px solid #0a3c96; border-bottom: 0; border-radius: 3px 4px 0 0; line-height: 21px; text-align: center; background: linear-gradient(#f4f9ff, #c2dcff); box-shadow: inset -1px 0 #6d97d8, inset 1px 0 #fff; }
.tab.active { width: 108px; border: 0; background: none; box-shadow: none; position: relative; height: 23px; z-index: 1; text-align: left; padding-left: 25px; display: flex; }
.tab.active svg { position: absolute; left: 0; top: 0; }
.tab.active b, .tab.active em { position: relative; line-height: 22px; }
.tab.active em { font-size: 11px; font-weight: 700; margin-left: 8px; line-height: 20px; color: #1d3f78; }
.cornerbtn { margin: -1px 2px 0 auto; width: 19px; height: 20px; background: #e9eff8; border: 1px solid #7d95bd; border-radius: 2px; padding: 1px; }
.frame { flex: 1; border: 1px solid #2a5599; display: flex; }
.inner { flex: 1; border: 1px solid #ffb660; display: flex; flex-direction: column; background: linear-gradient(#c5d8f9, #c9def8); padding: 0 2px 2px; }
.ctools { height: 26px; display: flex; gap: 5px; padding: 5px 0 0 7px; background: linear-gradient(#e8f2ff, #cfe0fb 70%, #b9d3fa); border-bottom: 1px solid #6f9fdf; margin: 0 -2px; flex: none; }
.tsep { width: 2px; height: 16px; background: linear-gradient(90deg, #8fbef5 50%, #fff 50%); }
.subs { height: 31px; display: flex; padding: 4px 0 0; flex: none; }
.subs span { height: 19px; line-height: 18px; border-right: 1px solid #999; box-shadow: 1px 0 #fff; text-align: center; flex: none; }
.subs .nb { border: 0; box-shadow: none; padding-right: 1px; }
.subs .on { width: 42px; height: 23px; line-height: 20px; margin-top: -2px; border: 1px solid #000080; background: #ffc070; font-weight: 700; box-shadow: none; }
.chartwrap { flex: 1; padding: 0 3px 3px; background: linear-gradient(#bfdbff, #648fcb); display: flex; flex-direction: column; }
.chead { height: 28px; flex: none; background: linear-gradient(#e1eefe, #c0dafe 50%, #b0d3ff); padding: 0 8px 0 6px; display: flex; justify-content: space-between; align-items: center; line-height: 29px; color: #0f3b78; }
.chead i { border: 4px solid transparent; border-top-color: #0f3b78; margin-top: 6px; }
.chartbox { flex: 1; border: 1px solid #7f9a66; background: #fff; overflow: hidden; }
.ct { font: 11px "DejaVu Sans Condensed", "DejaVu Sans", sans-serif; fill: #1c1c1c; }

.status { height: 25px; margin-top: auto; border-top: 1px solid #567db0; background: linear-gradient(#e0eeff, #c5deff 9px, #a8ceff 9px, #c0dcff); display: flex; align-items: center; flex: none; font-size: 16px; color: #0b1f5c; }
.st { height: 22px; display: flex; align-items: center; border-right: 1px solid #9a9a9a; box-shadow: 1px 0 #fff; padding-left: 8px; }
.st + .st { padding-left: 9px; }
.st svg { margin-right: 3px; }
.st.nopad { padding-left: 3px; }
.st.band { letter-spacing: -.7px; }
.tight { letter-spacing: -1px; }
.st svg.s2 { margin-left: 9px; }
.ready { padding-left: 4px; }
.alarm { margin-left: auto; height: 22px; display: flex; align-items: center; gap: 2px; width: 106px; border-right: 1px solid #999; box-shadow: 1px 0 #fff; margin-right: 3px; }
.cnt { width: 50px; display: flex; align-items: center; gap: 5px; }
.cnt:last-child { width: 48px; }

.meter { position: absolute; left: 2399px; top: 205px; width: 149px; height: 75px; z-index: 5; filter: drop-shadow(0 1px 3px #0006); }
.pill { position: absolute; left: 0; top: 11px; width: 110px; height: 53px; border-radius: 27px 0 0 27px; background: linear-gradient(#2c3346 49%, #232a3a 50%, #2f3649); color: #9da3b0; font-size: 13px; }
.pill div { height: 27px; display: flex; align-items: center; padding-left: 13px; }
.pill svg { margin-right: 19px; }
.pill b { color: #dfe2e8; font-size: 15px; margin-right: 1px; }
.disc { position: absolute; left: 74px; top: 0; width: 75px; height: 75px; border-radius: 50%; background: linear-gradient(#4a556c, #414a60); border: 1px solid #3a4256; color: #eceef2; }
.disc svg { position: absolute; left: -1px; top: -1px; }
.disc span { position: absolute; left: 13px; top: 17px; font: 300 31px/38px Roboto, "Noto Sans", sans-serif; }
.disc small { font-size: 13px; font-weight: 400; margin-left: 2px; }
```
FILE: app.js
```js
// Node explorer: [depth, state (-: open, +: closed, '': leaf), icon, arrows, label, colour]
const T = { r: ['#e23a26', '#777'], g: ['#3fb043', '#777'], n: ['#b4c8b4', '#a6aaa6'] };
const rows = [
  [0, '-', 'tt', '', '协议浏览器 (1)', '#000'],
  [1, '-', 't:r', '', 'Ethernet II (4)', '#009900'],
  [2, '-', 't:r', '', 'IP (5)', '#0066a0'],
  [3, '+', 't:r', '', 'UDP (9)', '#cc6600'],
  [3, '-', 't:r', '', 'TCP (4)', '#0099cc'],
  [4, '-', 't:n', '', 'HTTP (2)', '#dd00dd'],
  [5, '+', 't:n', '', 'REQUEST (2)', '#006600'],
  [5, '+', 't:n', '', 'RESPONSE (4)', '#cc6600'],
  [4, '-', 't:r', '', 'SSL (1)', '#ff9933'],
  [5, '', 't:r', '', 'HTTPS', '#0033ff'],
  [4, '+', 't:n', '', 'DNS (2)', '#996666'],
  [4, '+', 't:n', '', 'NBSS (1)', '#993300'],
  [3, '+', 't:n', '', 'ICMP (4)', '#ff9999'],
  [3, '', 't:n', '', 'IGMP', '#0099ff'],
  [3, '+', 't:n', '', 'GRE (1)', '#ff9900'],
  [2, '+', 't:r', '', 'IPv6 (2)', '#cccc33'],
  [2, '+', 't:g', '', 'ARP (2)', '#0033cc'],
  [2, '', 't:n', '', 'LLDP', '#009900'],
  [0, '+', 'nic', '', '物理浏览器 (3)', '#000'],
  [0, '-', 'net', '', 'IP浏览器 (7)', '#000'],
  [1, '-', 'fo', '4G', '本地子网 (1)', '#000'],
  [2, '-', 'fo', '4G', '121.48.163.0/24 (6)', '#000'],
  [3, '', 'pc', '2D', '121.48.163.204', '#000'],
  [3, '', 'pcs', 'Un', '121.48.163.255', '#000'],
  [3, '', 'pcn', '2n', '121.48.163.123', '#000'],
  [3, '', 'pc', '2G', 'cddsclab.f3322.net', '#339966'],
  [3, '', 'pcn', '2n', '121.48.163.128', '#000'],
  [3, '', 'pcn', 'Dn', '121.48.163.1', '#000'],
  [1, '+', 'fn', 'Dn', '本网络 (2)', '#000'],
  [1, '+', 'f', 'DD', '链路本地 (1)', '#000'],
  [1, '+', 'fn', '2n', '私有网络 (2)', '#000'],
  [1, '+', 'f', 'UG', '组播地址 (3)', '#000'],
  [1, '+', 'fn', 'Un', '广播地址 (1)', '#000'],
  [1, '-', 'fog', '4G', 'Internet地址 (17)', '#000'],
  [2, '-', 'flag', '4G', '中国 (16)', '#000'],
  [3, '+', 'fg', '2D', '广东 (5)', '#000'],
  [3, '+', 'fg', '4D', '四川 (2)', '#000'],
  [3, '+', 'fg', '2G', '北京 (70)', '#000'],
  [3, '+', 'fgg', '2n', '上海 (64)', '#000'],
  [3, '+', 'fgn', '2n', '台湾 (16)', '#000'],
  [3, '-', 'fogn', '2n', '香港 (24)', '#000'],
  [4, '', 'pcg', '2n', 'settings-win.data.microsoft.c', '#992288'],
  [4, '', 'pcg', '2n', 'captive.apple.com', '#339922'],
  [4, '', 'pcg', 'Un', 'www.google.com', '#a05028'],
  [4, '', 'pcg', 'Un', 'www.google.com', '#339999'],
];
const openTail = new Set([0, 2, 3, 4]);

function hasNext(i, d) {
  for (let k = i + 1; k < rows.length; k++) {
    if (rows[k][0] < d) return false;
    if (rows[k][0] === d) return true;
  }
  return openTail.has(d);
}
const dot = d => `<path d="${d}" stroke="#8c8c8c" stroke-dasharray="1 1.6" fill="none"/>`;

function icon(k) {
  const s = (v, b) => `<svg class="ic" viewBox="0 0 16 16" style="${v}">${b}</svg>`;
  if (k.startsWith('t:')) { const [c, m] = T[k[2]]; return s(`--c:${c};--m:${m}`, '<use href="#t" y="0" width="15" height="14"/>'); }
  if (k === 'tt') return s('', '<use href="#tt" width="15" height="14"/>');
  if (k === 'nic') return s('', '<path d="M1 1h12l2 3v7l-3 1v2H8l-1-2-5-1z" fill="#2da32d" stroke="#165c16"/><path d="M3 3h2v2H3zM7 3h2v2H7zM3 7h2v2H3z" fill="#e7f0c0"/><path d="M10 4l2 2v4" stroke="#9fe8e0" fill="none"/><path d="M8 11h4v2.500H8z" fill="#e4d431"/>');
  if (k === 'net') return s('', '<path d="M1 .5h8v6H1z" fill="#5ab0f0" stroke="#2a5a94"/><path d="M8 5.500h7v6H8z" fill="#5ab0f0" stroke="#2a5a94"/><path d="M1 8h6v3H1zM8 12h8v3H8z" fill="#ccd6e2" stroke="#6c7a90" stroke-width=".6"/><path d="M0 14h7" stroke="#37b04a" stroke-width="2"/><path d="M4 8v6" stroke="#777"/>');
  if (k === 'flag') return s('', '<path d="M1 2h14v11H1z" fill="#de2910"/><path d="M4.500 4l.8 1.700 1.700.1-1.300 1.200.5 1.800-1.700-1-1.700 1 .5-1.800L2 5.800l1.700-.1z" fill="#ffde00"/><path d="M8.500 4h1M10 6h1M10 8.500h1M8.500 10h1" stroke="#ffb400"/>');
  if (k[0] === 'f') {
    const grey = k.endsWith('n'), green = k === 'fgg', open = k[1] === 'o', globe = k.includes('g');
    const v = grey ? '--f:#e9e5d4;--fb:#c6bfa8;--n:#b8cdb8;--g1:#c7d4dc;--g2:#b4c8b0' : `--f:#ffd268;--fb:#cf8f34;--n:${green ? '#3cc044' : '#e23a26'};--g1:#5aa8e4;--g2:#3f8f3c`;
    return s(v, `<use href="#${open ? 'folderOpen' : 'folder'}" width="16" height="16"/>` + (globe ? '<use href="#globe" x="3" y="2" width="9" height="9"/>' : ''));
  }
  const on = k === 'pc';
  const v = on ? '--s:#3f9ee8;--sb:#2a5a94' : '--s:#a9b8c6;--sb:#93a2b2;--g1:#b9cbd8;--g2:#9ab49a';
  const extra = k === 'pcg' ? '<use href="#globe" x="8" y="7" width="9" height="9"/>' : k === 'pcs' ? '<path d="M6 12l3-1 5-4v9l-5-3H6z" fill="#d8ceb4" stroke="#8f866c" stroke-width=".8"/>' : '';
  return s(v, '<use href="#pc" width="16" height="16"/>' + extra);
}
const arrowColour = { G: '#6db05c', D: '#3b8a35', n: '#b0b0b0' };

let html = `<div class="row root"><svg width="16" height="16" viewBox="0 0 16 16"><circle cx="8" cy="8" r="7.200" fill="#5d9bcc" stroke="#c8dcec" stroke-width="1.500"/><path d="M5 5q-2 5 3 6 4 0 4-4M8 4.500v4h2.500" fill="none" stroke="#fff" stroke-width="1.600"/></svg><span>实时分析 - 默认</span></div>`;
rows.forEach(([d, st, ic, ar, label, colour], i) => {
  let r = '<div class="row"><i style="width:4px"></i>';
  for (let c = 0; c < d; c++) r += `<svg class="lines" viewBox="0 0 18 24">${hasNext(i, c) ? dot('M8.500 0v24') : ''}</svg>`;
  r += `<svg class="lines" viewBox="0 0 18 24" style="overflow:visible">${dot(hasNext(i, d) ? 'M8.500 0v24' : 'M8.500 0v12')}${dot('M9 11.500h12')}`;
  if (st) r += `<rect x="4.500" y="7.500" width="8" height="8" rx="1" fill="#fff" stroke="#777"/><path d="M6 11.500h5${st === '+' ? 'M8.500 9v5' : ''}" stroke="#000"/>`;
  r += `</svg><i style="width:4px"></i>${icon(ic)}`;
  if (ar) r += `<svg class="ar" style="--a:${arrowColour[ar[1]]}"><use href="#arr${ar[0]}" width="11" height="15"/></svg>`;
  const latin = /^[\x20-\x7e]+$/.test(label) ? ' lat' : '';
  html += r + `<span class="txt${latin}" style="color:${colour}">${label}</span></div>`;
});
document.getElementById('tree').innerHTML = html;

// Ribbon gauges
function gauge(id, name, marks, minor) {
  const P = (a, r) => [49 - r * Math.cos(a), 50 - r * Math.sin(a)];
  const seg = (a, b, r) => { const p = P(a, r), q = P(b, r); return `M${p[0]} ${p[1]}A${r} ${r} 0 0 1 ${q[0]} ${q[1]}`; };
  let s = '<svg width="98" height="66" viewBox="0 0 98 66"><path d="M2 58Q-2 44 6 29 19 2 49 1t43 28q8 15 4 29-2 2-6 3-41 8-82 0-4-1-6-3z" fill="#7c9ab8"/><path d="M3 48Q3 34 10 25 23 4 49 4t39 21q7 9 7 23 0 6-4 8H59q-2 5-10 5t-10-5H7q-4-2-4-8z" fill="url(#gDial)"/>';
  s += `<path d="${seg(0, Math.PI, 38)}" stroke="#bcd4f4" stroke-width="4" fill="none"/><path d="${seg(0, .9, 39)}" stroke="#5cd62c" stroke-width="3" fill="none"/><path d="${seg(2.350, 3.140, 39)}" stroke="#f03030" stroke-width="3.500" fill="none"/>`;
  for (let k = 0; k <= minor; k++) { const a = Math.PI * k / minor, p = P(a, 36), q = P(a, 39); s += `<path d="M${p[0]} ${p[1]}L${q[0]} ${q[1]}" stroke="#3b444c" stroke-width="${minor > 10 ? .8 : 2}"/>`; }
  marks.forEach(([t, x, y]) => { s += `<text class="dial-num" x="${x}" y="${y}">${t}</text>`; });
  s += `<text class="dial-name" x="49" y="42">${name}</text><path d="M19 50l30-1v3z" fill="#e0a43c"/><circle cx="49" cy="50" r="5" fill="#2f6fb4"/></svg>`;
  document.getElementById(id).innerHTML = s;
}
gauge('gauge1', 'Utilization', [['0', 18, 50], ['20', 24, 35], ['40', 39.500, 23], ['60', 58.500, 23], ['80', 74, 35], ['100', 78, 50]], 10);
gauge('gauge2', 'Packet/s', [['0', 18, 50], ['10K', 31, 31], ['50K', 49.500, 21], ['100K', 66, 31], ['200K', 76, 50]], 32);

// Traffic trend
let tr = '<rect width="905" height="82" fill="#000"/><path d="M0 .5h905M.5 0v82" stroke="#777"/>';
for (let k = 0; k < 34; k++) tr += `<path d="M${(25.500 + k * 25.870).toFixed(1)} 1v81" stroke="#0b8045"/>`;
[21.500, 41.500, 62.500].forEach(y => { tr += `<path d="M0 ${y}h905" stroke="#0b8045"/>`; });
tr += '<path d="M20 82l3-10 2.500-18 2 26 3-1 3 3zM40 82l4-36 4.500 36zM409 82l4-12 2 12zM417 82l5-34 4 34zM683 82l4-22 4 22zM795 82l6.500-21 2 21zM860 82l4-7 4-2 3.500-12 2 21z" fill="#1f5f1f" stroke="#00e000"/><path d="M10 81.500h6M125 81.500h4M455 81.500h5M700 81.500h8" stroke="#00e000"/>';
document.getElementById('trend').innerHTML = tr;

// Bar chart: [label, label width, light, dark, outline, top]
const bars = [
  ['2.tlu.dl.delivery.mp.microsoft.com', 173, '#9de080', '#4a9e28', '#2f7a1e', 407],
  ['xsoscmcc.zhongzhuanserver.com', 167, '#5bbaff', '#0067b8', '#004b85', 1103],
  ['vodkgeyttp9.vod.126.net', 127.5, '#e68cca', '#b8298c', '#8a1c68', 1114],
  ['d3.music.126.net', 84, '#ffc67d', '#f59900', '#b3740f', 1131],
  ['d4.music.126.net', 84, '#ff6078', '#cc0522', '#8a0018', 1131],
  ['p2.music.126.net', 85, '#52c9ff', '#007db8', '#005f8c', 1132],
  ['p1.music.126.net', 85, '#cdea80', '#8cc21d', '#6a961a', 1132],
  ['d1.music.126.net', 85, '#b0b0b0', '#5f5f5f', '#3f3f3f', 1132],
  ['cn-sccd-fx-bcache-04.bilivideo.com', 177.5, '#ff40bf', '#73004f', '#4d0033', 1163],
  ['cn-sccd-fx-bcache-01.bilivideo.com', 177.5, '#4dffff', '#00919a', '#006b73', 1175],
  ['upos-sz-mirrorkodo.bilivideo.com', 168, '#ffe97f', '#ffda00', '#bfa000', 1178],
  ['s1.hdslb.com', 67, '#ffb27d', '#eb6900', '#b35000', 1203],
  ['v.iqiyi.com', 54, '#66aaff', '#0a4d9e', '#073a78', 1204],
  ['static.iqiyi.com', 77, '#55ffbb', '#00a368', '#007a4d', 1204],
  ['stc.iqiyipic.com', 79, '#aac2aa', '#5d7a5d', '#465c46', 1204],
  ['www.iqiyipic.com', 88, '#f58f7d', '#c7381a', '#962a14', 1204],
  ['static-s.iqiyi.com', 85.5, '#8f80dc', '#3f2a90', '#2d1c70', 1204],
  ['pic6.iqiyipic.com', 84, '#a9ff70', '#55d400', '#3f9e0a', 1204],
  ['pic8.iqiyipic.com', 84, '#ffdb7a', '#fbbc00', '#bd8c00', 1205],
  ['pic0.iqiyipic.com', 84, '#4dffb8', '#008f56', '#006b41', 1205],
];
let c = '<defs>';
bars.forEach((b, i) => { c += `<linearGradient id="b${i}"><stop offset="0" stop-color="${b[2]}"/><stop offset="1" stop-color="${b[3]}"/></linearGradient>`; });
c += '</defs><path d="M441 324.500h2098.500V1233" fill="none" stroke="#c8c8a4"/>';
[516.5, 755.5, 994.5].forEach(y => { c += `<path d="M441 ${y}h2098" stroke="#dcdcca"/><path d="M435 ${y}h5" stroke="#4b5a28"/>`; });
for (let k = 0; k < 20; k++) c += `<path d="M${492.5 + 105 * k} 325v908" stroke="#dcdcca"/>`;
bars.forEach((b, i) => { c += `<rect x="${461.5 + 105 * i}" y="${b[5] + .5}" width="63" height="${1233 - b[5]}" fill="url(#b${i})" stroke="${b[4]}"/>`; });
c += '<path d="M440.500 324v910M435 1234.500h2105" stroke="#4b5a28"/>';
for (let k = 0; k < 100; k++) { const x = 450.5 + 21 * k; c += `<path d="M${x} 1235v${k % 5 === 2 ? 5 : 2}" stroke="#4b5a28"/>`; }
[['600,000', 520], ['400,000', 759.5], ['200,000', 998.5]].forEach(([t, y]) => { c += `<text class="ct" x="392" y="${y}" textLength="40" lengthAdjust="spacingAndGlyphs">${t}</text>`; });
c += '<text class="ct" x="427" y="1238" textLength="5.500" lengthAdjust="spacingAndGlyphs">0</text>';
c += '<rect x="1108.500" y="1250.500" width="710" height="93" fill="#eeeee2" stroke="#c8c8a4"/>';
const lx = [1112, 1309, 1511, 1703], tx = [1134, 1332, 1533, 1725.5];
bars.forEach((b, i) => {
  const k = Math.floor(i / 5), y = 1254 + 18 * (i % 5);
  const off = b[0].startsWith('cn-') ? -1 : b[1] === 84 && k === 0 ? 1.5 : 0;
  c += `<rect x="${lx[k] + .5}" y="${y + .5}" width="17" height="13" fill="url(#b${i})" stroke="${b[4]}"/><text class="ct" x="${tx[k] + off}" y="${y + 11}" textLength="${b[1]}" lengthAdjust="spacingAndGlyphs">${b[0]}</text>`;
});
document.getElementById('chart').innerHTML = c;
```
